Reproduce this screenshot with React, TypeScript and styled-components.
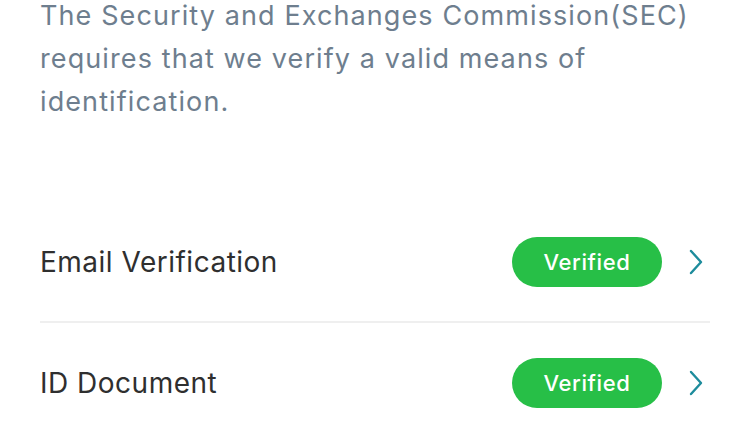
import React from "react";
import styled, { createGlobalStyle } from "styled-components";

const GlobalStyle = createGlobalStyle`
  html, body {
    margin: 0;
    padding: 0;
    background: #ffffff;
    font-family: "Inter", "Noto Sans", sans-serif;
  }
`;

const Page = styled.main`
  width: 750px;
  height: 421px;
  overflow: hidden;
  padding: 0 40px;
  box-sizing: border-box;
`;

const Intro = styled.p`
  margin: -6px 0 0;
  max-width: 668px;
  font-size: 27px;
  line-height: 43px;
  color: #6e7e8e;
  letter-spacing: 1.1px;
`;

const List = styled.ul`
  list-style: none;
  margin: 79px 0 0;
  padding: 0;
`;

const Row = styled.li`
  display: flex;
  align-items: center;
  height: 119px;
  & + & {
    border-top: 2px solid #efefef;
  }
`;

const Label = styled.span`
  flex: 1;
  font-size: 28px;
  letter-spacing: 0.5px;
  color: #2f2f2f;
`;

const Badge = styled.span<{ $ok?: boolean }>`
  display: inline-flex;
  align-items: center;
  justify-content: center;
  width: 150px;
  height: 50px;
  border-radius: 25px;
  background: ${(p) => (p.$ok ? "#27bf47" : "#e0a800")};
  color: #ffffff;
  font-size: 22px;
  font-weight: 500;
  letter-spacing: 0.6px;
`;

const Chevron = styled.svg`
  width: 16px;
  height: 26px;
  margin-left: 26px;
  margin-right: 6px;
  color: #1d8c9c;
`;

const items = [
  { label: "Email Verification", status: "Verified" },
  { label: "ID Document", status: "Verified" },
];

const App = () => {
  return (
    <Page>
      <GlobalStyle />
      <Intro>
        The Security and Exchanges Commission(SEC) requires that we verify a
        valid means of identification.
      </Intro>
      <List>
        {items.map((item) => (
          <Row key={item.label}>
            <Label>{item.label}</Label>
            <Badge $ok={item.status === "Verified"}>{item.status}</Badge>
            <Chevron viewBox="0 0 16 26" fill="none">
              <path
                d="M3 2l10 11L3 24"
                stroke="currentColor"
                strokeWidth="2.4"
                strokeLinecap="round"
                strokeLinejoin="round"
              />
            </Chevron>
          </Row>
        ))}
      </List>
    </Page>
  );
};

export default App;
